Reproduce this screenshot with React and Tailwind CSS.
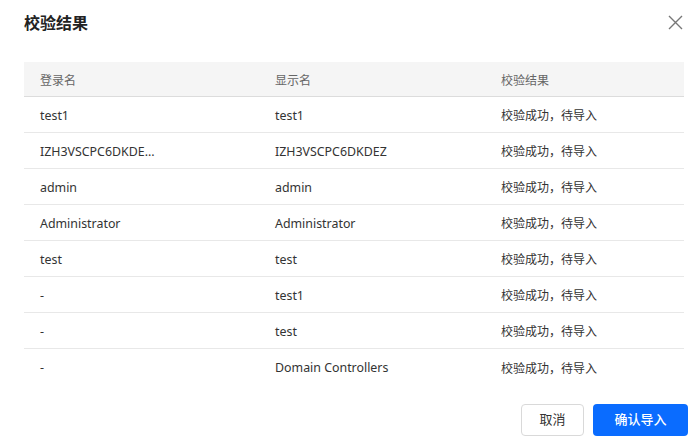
import React from "react";

const rows = [
  { login: "test1", display: "test1" },
  { login: "IZH3VSCPC6DKDE...", display: "IZH3VSCPC6DKDEZ" },
  { login: "admin", display: "admin" },
  { login: "Administrator", display: "Administrator" },
  { login: "test", display: "test" },
  { login: "-", display: "test1" },
  { login: "-", display: "test" },
  { login: "-", display: "Domain Controllers" },
];

export default function App() {
  return (
    <div
      className="w-[697px] h-[445px] bg-white text-[#333] overflow-hidden"
      style={{ fontFamily: '"Noto Sans", "Noto Sans CJK SC", sans-serif' }}
    >
      {/* Header */}
      <div className="flex items-center justify-between pl-6 pr-[14px] h-[44px] pt-[1px]">
        <h2 className="text-[16px] font-bold text-[#222]">校验结果</h2>
        <button className="text-[#777]">
          <svg width="15" height="15" viewBox="0 0 15 15" fill="none">
            <path d="M1 1L14 14M14 1L1 14" stroke="currentColor" strokeWidth="1.4" />
          </svg>
        </button>
      </div>

      {/* Table */}
      <div className="mt-[18px] ml-6 w-[660px]">
        <div className="grid grid-cols-[235px_226px_199px] h-[35px] items-center pt-[3px] bg-[#f5f5f5] border-b border-[#dcdcdc] text-[12px] text-[#666]">
          <div className="pl-4">登录名</div>
          <div className="pl-4">显示名</div>
          <div className="pl-4">校验结果</div>
        </div>
        {rows.map((r, i) => (
          <div
            key={i}
            className={`grid grid-cols-[235px_226px_199px] h-[36px] items-center pt-[3px] text-[12.4px] ${
              i < rows.length - 1 ? "border-b border-[#e8e8e8]" : ""
            }`}
          >
            <div className="pl-4 truncate">{r.login}</div>
            <div className="pl-4 truncate">{r.display}</div>
            <div className="pl-4 text-[12px]">校验成功，待导入</div>
          </div>
        ))}
      </div>

      {/* Footer */}
      <div className="flex justify-end gap-[9px] pr-[9px] mt-[19px]">
        <button className="w-[63px] h-[32px] rounded-[4px] border border-[#d9d9d9] bg-white text-[13px] text-[#333]">
          取消
        </button>
        <button className="w-[95px] h-[32px] rounded-[4px] bg-[#0a6cff] text-[13px] text-white font-medium">
          确认导入
        </button>
      </div>
    </div>
  );
}
